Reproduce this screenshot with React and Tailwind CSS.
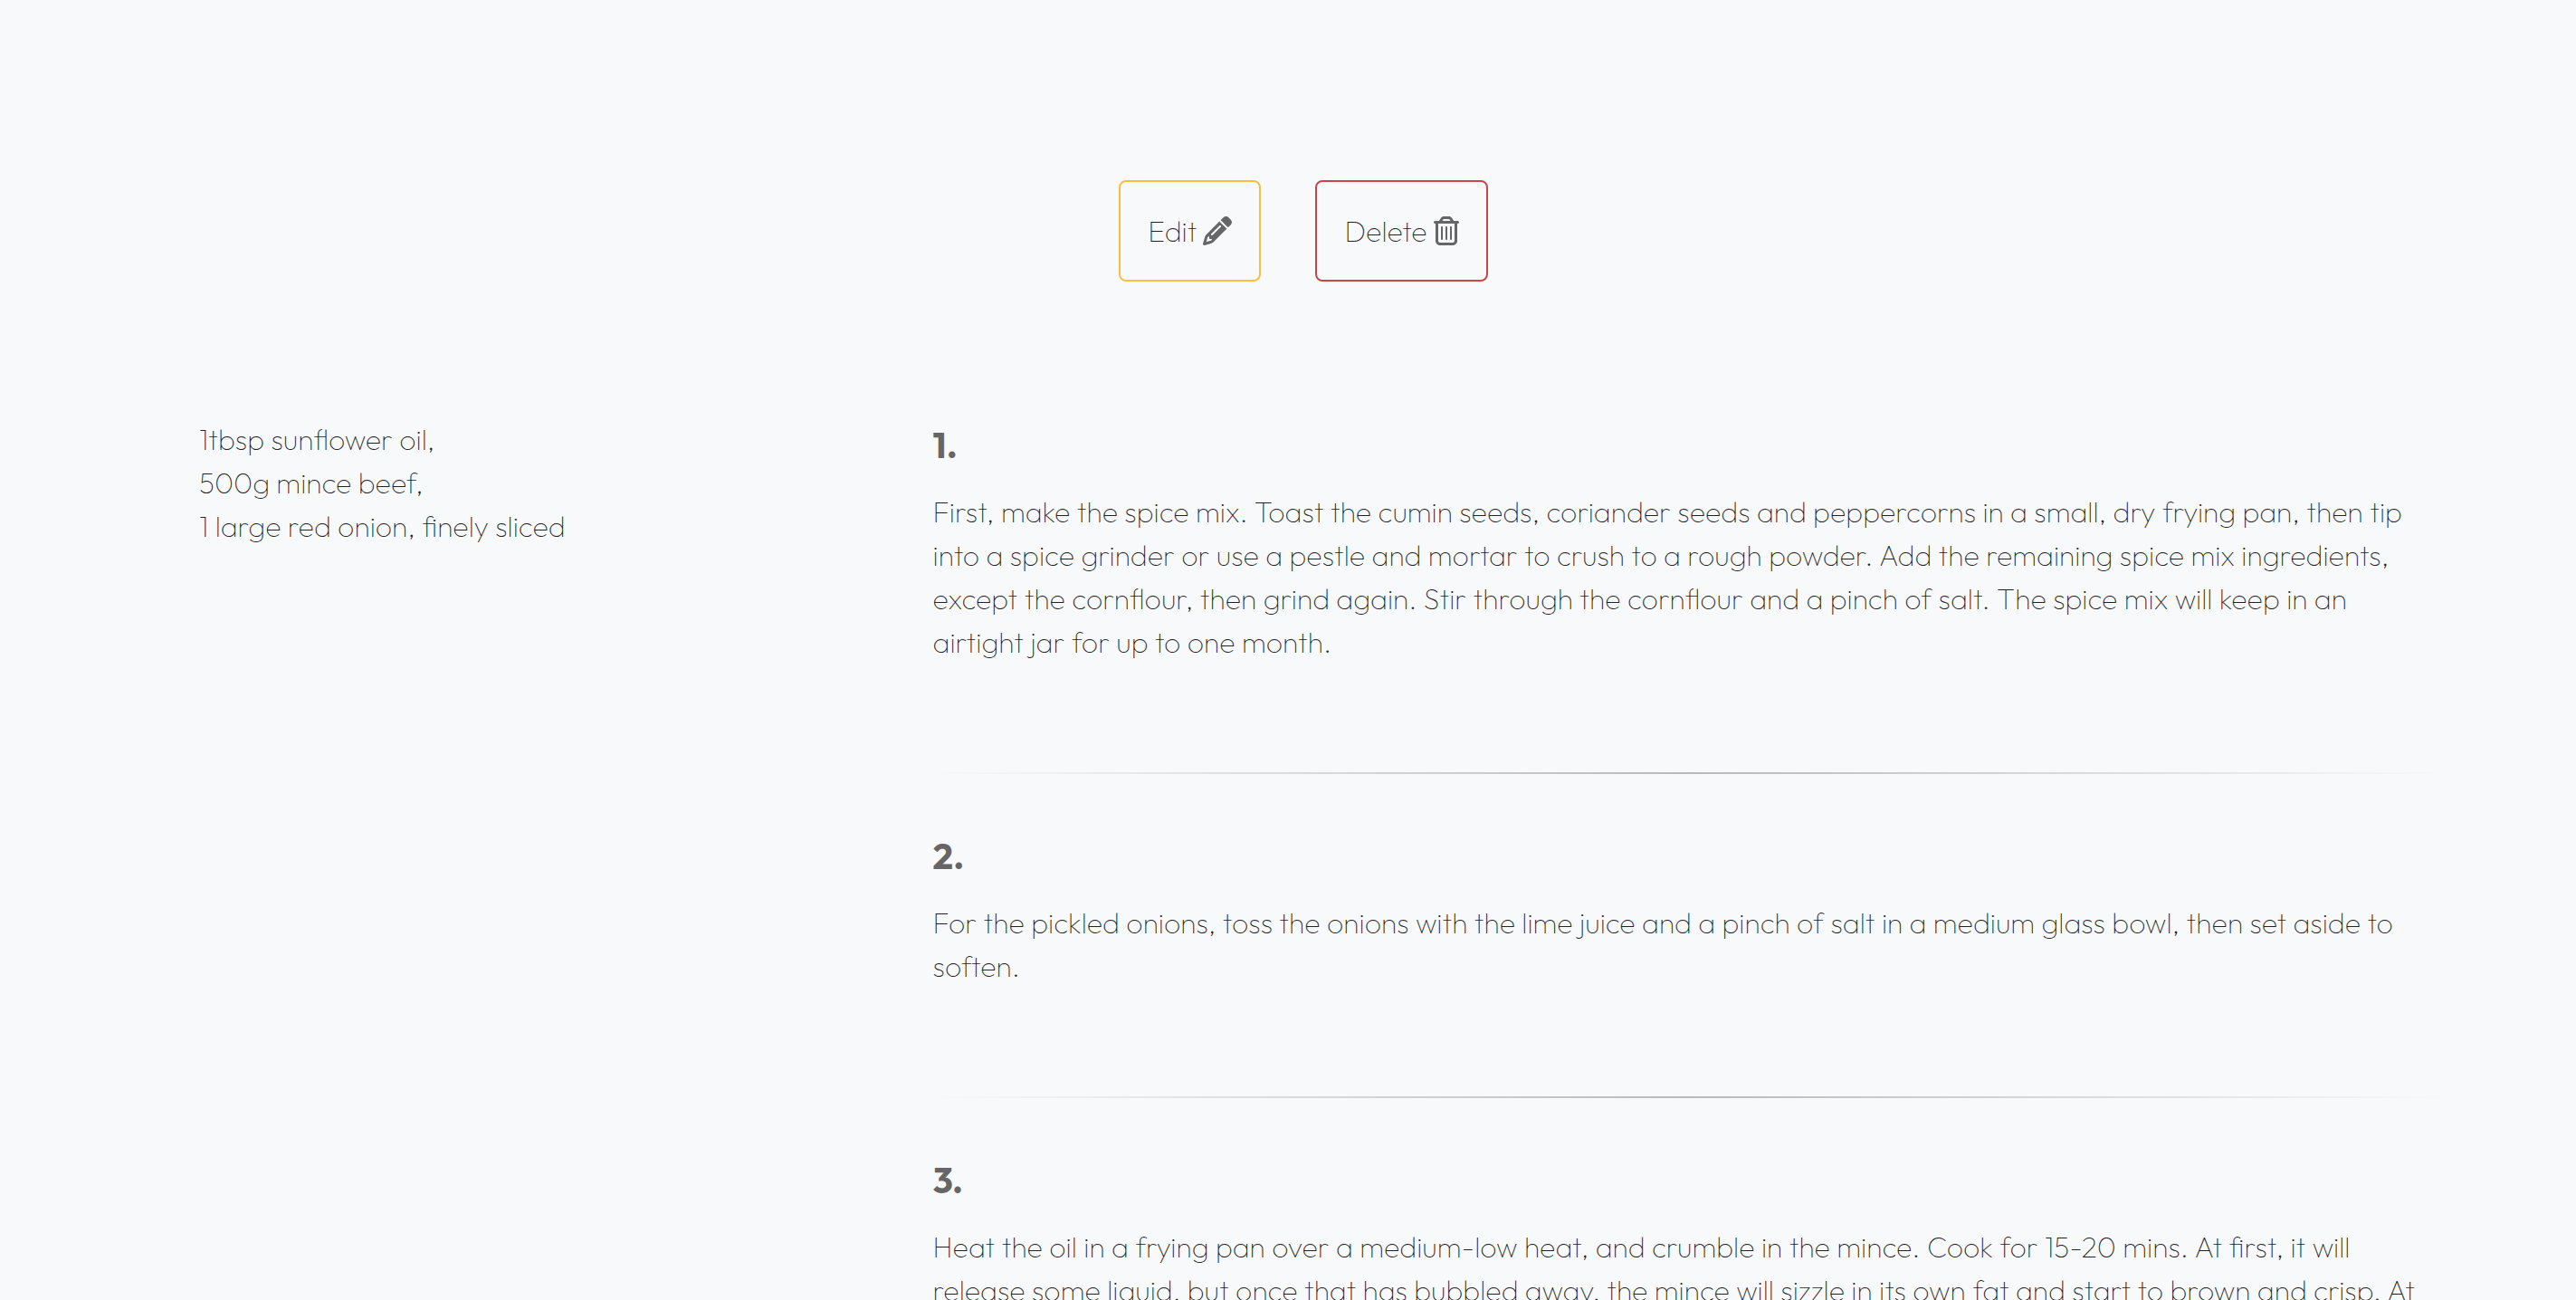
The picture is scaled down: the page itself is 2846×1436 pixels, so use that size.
import { FaPencil, FaRegTrashCan } from "react-icons/fa6";

const ingredients = ["1tbsp sunflower oil,", "500g mince beef,", "1 large red onion, finely sliced"];

const steps = [
  "First, make the spice mix. Toast the cumin seeds, coriander seeds and peppercorns in a small, dry frying pan, then tip into a spice grinder or use a pestle and mortar to crush to a rough powder. Add the remaining spice mix ingredients, except the cornflour, then grind again. Stir through the cornflour and a pinch of salt. The spice mix will keep in an airtight jar for up to one month.",
  "For the pickled onions, toss the onions with the lime juice and a pinch of salt in a medium glass bowl, then set aside to soften.",
  "Heat the oil in a frying pan over a medium-low heat, and crumble in the mince. Cook for 15-20 mins. At first, it will release some liquid, but once that has bubbled away, the mince will sizzle in its own fat and start to brown and crisp. At",
];

export default function App() {
  return (
    <div className="h-screen overflow-hidden bg-[#f8f9fb] font-['Outfit',sans-serif] text-[32px] leading-[48px] font-thin text-[#222222]">
      <div className="flex justify-center gap-[60px] pt-[199px] pl-[34px]">
        <button type="button" className="flex h-28 items-center gap-[7px] rounded-lg border-2 border-[#f6c044] px-[30px]">
          Edit <FaPencil className="size-8 text-[#666666]" />
        </button>
        <button type="button" className="flex h-28 items-center gap-[7px] rounded-lg border-2 border-[#cb444a] px-[30px]">
          Delete <FaRegTrashCan className="h-8 w-7 text-[#666666]" />
        </button>
      </div>
      <main className="grid grid-cols-[33fr_68fr] pt-[150px] pr-[145px] pl-[220px]">
        <ul>
          {ingredients.map((item) => (
            <li key={item}>{item}</li>
          ))}
        </ul>
        <ol className="pt-1.5">
          {steps.map((text, i) => (
            <li key={i}>
              {i > 0 && (
                <hr className="mt-[120px] mb-[66px] h-0.5 border-0 bg-linear-to-r from-transparent via-[#b9b9b9] to-transparent" />
              )}
              <h2 className="mb-[26px] text-[40px] font-bold text-[#666666]">{i + 1}.</h2>
              <p className="pr-4">{text}</p>
            </li>
          ))}
        </ol>
      </main>
    </div>
  );
}
